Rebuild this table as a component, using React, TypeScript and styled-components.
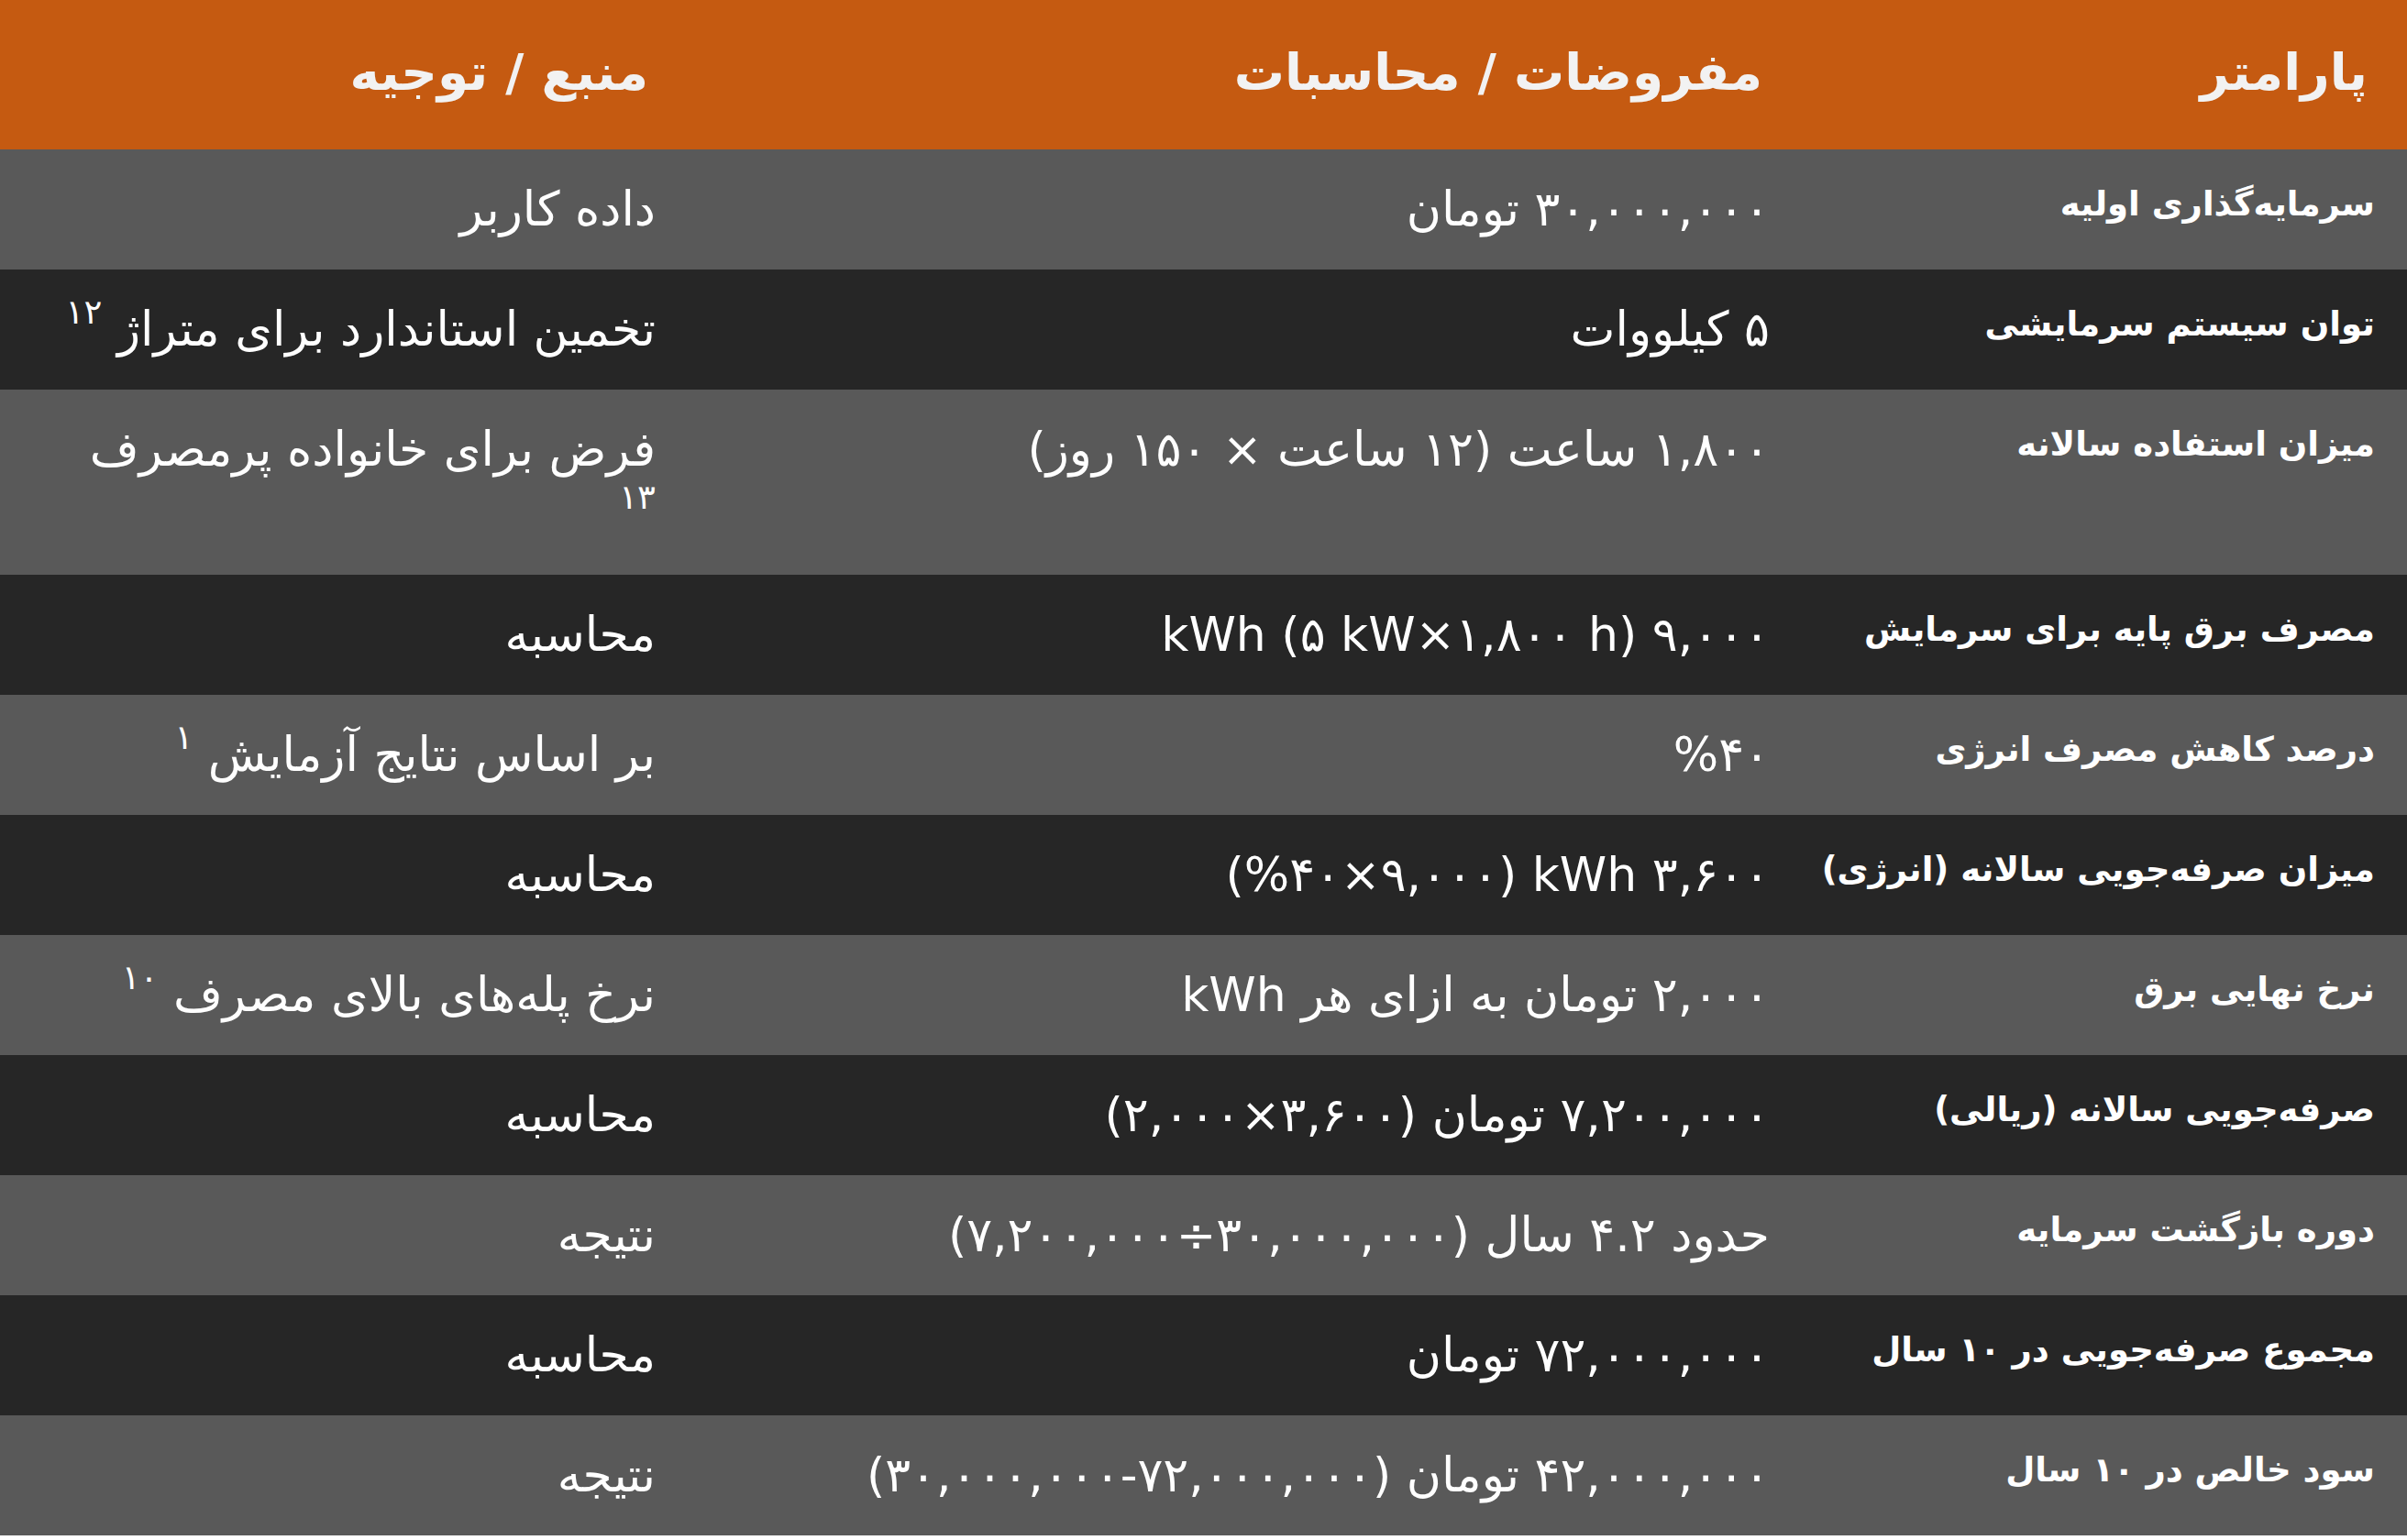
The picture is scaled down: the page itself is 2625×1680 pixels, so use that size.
import React from 'react';
import styled, { createGlobalStyle } from 'styled-components';

const GlobalStyle = createGlobalStyle`
	html, body {
		margin: 0;
		padding: 0;
		background: #ffffff;
	}
	body {
		font-family: 'DejaVu Sans', sans-serif;
	}
`;

const Table = styled.div`
	width: 2625px;
	direction: rtl;
	font-family: 'DejaVu Sans', sans-serif;
	color: #ffffff;
`;

const Row = styled.div<{ $tone: 'head' | 'light' | 'dark' }>`
	display: grid;
	grid-template-columns: minmax(0, 660fr) minmax(0, 1215fr) minmax(0, 750fr);
	background-color: ${({ $tone }) =>
		$tone === 'head' ? '#c55a11' : $tone === 'light' ? '#595959' : '#262626'};
`;

const HeadCell = styled.div`
	height: 163px;
	box-sizing: border-box;
	display: flex;
	align-items: center;
	padding: 0 43px 6px 20px;
	font-size: 55px;
	font-weight: bold;
	color: #f2f2f2;
	white-space: nowrap;
`;

const ParamCell = styled.div`
	padding: 24px 35px 36px 10px;
	font-size: 37px;
	font-weight: bold;
	line-height: 71px;
	white-space: nowrap;
`;

const Cell = styled.div`
	padding: 30px 35px 30px 20px;
	font-size: 52px;
	line-height: 71px;
`;

const Ltr = styled.bdi.attrs({ dir: 'ltr' })`
	unicode-bidi: isolate;
`;

const Note = styled.sup`
	font-size: 37px;
	line-height: 0;
	vertical-align: 24px;
`;

type Item = {
	param: string;
	value: React.ReactNode;
	source: React.ReactNode;
};

const items: Item[] = [
	{ param: 'سرمایه‌گذاری اولیه', value: '۳۰,۰۰۰,۰۰۰ تومان', source: 'داده کاربر' },
	{
		param: 'توان سیستم سرمایشی',
		value: '۵ کیلووات',
		source: (
			<>
				تخمین استاندارد برای متراژ <Note>۱۲</Note>
			</>
		),
	},
	{
		param: 'میزان استفاده سالانه',
		value: '۱,۸۰۰ ساعت (۱۲ ساعت × ۱۵۰ روز)',
		source: (
			<>
				فرض برای خانواده پرمصرف
				<br />
				<Note>۱۳</Note>
			</>
		),
	},
	{
		param: 'مصرف برق پایه برای سرمایش',
		value: (
			<>
				۹,۰۰۰ <Ltr>kWh (۵ kW×۱,۸۰۰ h)</Ltr>
			</>
		),
		source: 'محاسبه',
	},
	{
		param: 'درصد کاهش مصرف انرژی',
		value: <Ltr>%۴۰</Ltr>,
		source: (
			<>
				بر اساس نتایج آزمایش <Note>۱</Note>
			</>
		),
	},
	{
		param: 'میزان صرفه‌جویی سالانه (انرژی)',
		value: (
			<>
				۳,۶۰۰ <Ltr>kWh</Ltr> <Ltr>(%۴۰×۹,۰۰۰)</Ltr>
			</>
		),
		source: 'محاسبه',
	},
	{
		param: 'نرخ نهایی برق',
		value: '۲,۰۰۰ تومان به ازای هر kWh',
		source: (
			<>
				نرخ پله‌های بالای مصرف <Note>۱۰</Note>
			</>
		),
	},
	{
		param: 'صرفه‌جویی سالانه (ریالی)',
		value: (
			<>
				۷,۲۰۰,۰۰۰ تومان <Ltr>(۲,۰۰۰×۳,۶۰۰)</Ltr>
			</>
		),
		source: 'محاسبه',
	},
	{
		param: 'دوره بازگشت سرمایه',
		value: (
			<>
				حدود ۴.۲ سال <Ltr>(۷,۲۰۰,۰۰۰÷۳۰,۰۰۰,۰۰۰)</Ltr>
			</>
		),
		source: 'نتیجه',
	},
	{ param: 'مجموع صرفه‌جویی در ۱۰ سال', value: '۷۲,۰۰۰,۰۰۰ تومان', source: 'محاسبه' },
	{
		param: 'سود خالص در ۱۰ سال',
		value: (
			<>
				۴۲,۰۰۰,۰۰۰ تومان <Ltr>(۳۰,۰۰۰,۰۰۰-۷۲,۰۰۰,۰۰۰)</Ltr>
			</>
		),
		source: 'نتیجه',
	},
];

const App = () => {
	return (
		<>
			<GlobalStyle />
			<Table>
				<Row $tone="head">
					<HeadCell>پارامتر</HeadCell>
					<HeadCell>مفروضات / محاسبات</HeadCell>
					<HeadCell>منبع / توجیه</HeadCell>
				</Row>
				{items.map((item, i) => (
					<Row key={item.param} $tone={i % 2 === 0 ? 'light' : 'dark'}>
						<ParamCell>{item.param}</ParamCell>
						<Cell>{item.value}</Cell>
						<Cell>{item.source}</Cell>
					</Row>
				))}
			</Table>
		</>
	);
};

export default App;
